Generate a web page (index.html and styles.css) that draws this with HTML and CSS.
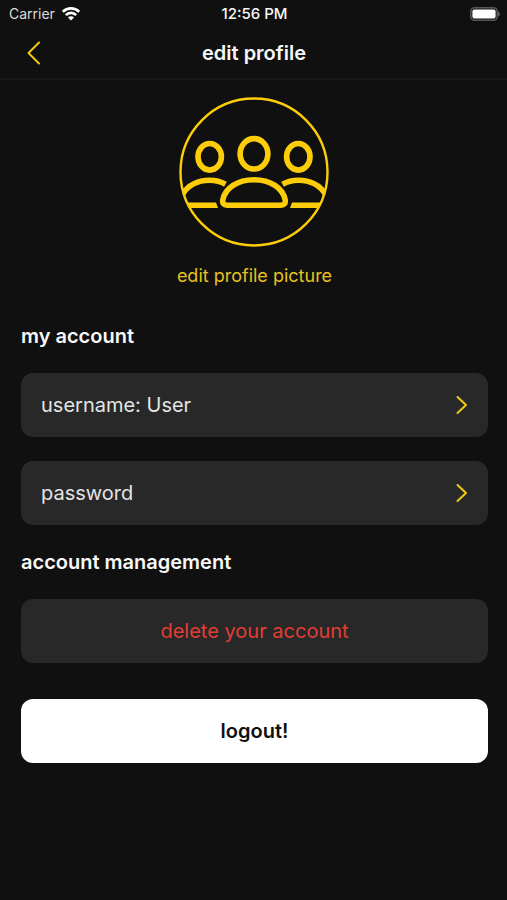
FILE: index.html
```html
<!DOCTYPE html>
<html lang="en">
<head>
<meta charset="utf-8">
<meta name="viewport" content="width=device-width, initial-scale=1">
<title>edit profile</title>
<link rel="stylesheet" href="styles.css">
</head>
<body>
<div class="status">
  <div class="status-left">
    <span class="carrier">Carrier</span>
    <svg class="wifi" width="18" height="14" viewBox="0 0 18 14" fill="none" stroke="#fff" stroke-width="2.6" aria-hidden="true">
      <path d="M0.8 4.8C5.3 0.2 12.7 0.2 17.2 4.8"/>
      <path d="M3.8 8.2C6.7 5.1 11.3 5.1 14.2 8.2"/>
      <path d="M9 13.6L6 10.4C7.7 8.8 10.3 8.8 12 10.4Z" fill="#fff" stroke="none"/>
    </svg>
  </div>
  <span class="clock">12:56 PM</span>
  <div class="status-right">
    <svg width="30" height="14" viewBox="0 0 30 14" aria-hidden="true">
      <rect x="0.8" y="0.8" width="26.4" height="12.4" rx="3.8" fill="none" stroke="#58585a" stroke-width="1.6"/>
      <rect x="2.4" y="2.4" width="23.2" height="9.200" rx="2" fill="#fff"/>
      <path d="M28.200 4.600C30.300 5.400 30.300 8.600 28.200 9.400Z" fill="#6a6a6c"/>
    </svg>
  </div>
</div>
<header class="nav">
  <button class="back" type="button" aria-label="Back">
    <svg width="14" height="24" viewBox="0 0 14 24" fill="none" stroke="#f2ca14" stroke-width="2" stroke-linecap="round" stroke-linejoin="round" aria-hidden="true"><path d="M12 1.500L1.500 12L12 22.500"/></svg>
  </button>
  <h1>edit profile</h1>
</header>
<main>
  <button class="picture" type="button">
    <svg width="150" height="150" viewBox="0 0 150 150" fill="none" stroke="#fccd08" stroke-width="5.6" aria-hidden="true">
      <defs><clipPath id="disc"><circle cx="75" cy="75" r="74"/></clipPath></defs>
      <circle cx="75" cy="75" r="73.5" stroke-width="2.4"/>
      <ellipse cx="75" cy="56.8" rx="13.9" ry="15.2"/>
      <path d="M43.8 103C46 91 58.500 82.800 75 82.800S104 91 106.200 103C106.700 106.300 105.300 108.200 102 108.200H48C44.700 108.200 43.300 106.300 43.800 103Z"/>
      <g clip-path="url(#disc)">
        <ellipse cx="30.700" cy="59.800" rx="11.700" ry="13.300"/>
        <path d="M3 98C9 88 18.500 83.200 30.700 83.200C36.500 83.200 41.500 84.400 46.500 87.200"/>
        <path d="M5 105.400H37L39 111H5Z" fill="#fccd08" stroke="none"/>
        <ellipse cx="119.300" cy="59.800" rx="11.700" ry="13.300"/>
        <path d="M147 98C141 88 131.500 83.200 119.300 83.200C113.500 83.200 108.500 84.400 103.500 87.200"/>
        <path d="M145 105.400H113L111 111H145Z" fill="#fccd08" stroke="none"/>
      </g>
    </svg>
    <span>edit profile picture</span>
  </button>
  <h2>my account</h2>
  <div class="rows">
    <button class="row" type="button">
      <span>username: User</span>
      <svg width="12" height="20" viewBox="0 0 12 20" fill="none" stroke="#f2ca14" stroke-width="2" stroke-linecap="round" stroke-linejoin="round" aria-hidden="true"><path d="M1.500 2L10 10L1.500 18"/></svg>
    </button>
    <button class="row" type="button">
      <span>password</span>
      <svg width="12" height="20" viewBox="0 0 12 20" fill="none" stroke="#f2ca14" stroke-width="2" stroke-linecap="round" stroke-linejoin="round" aria-hidden="true"><path d="M1.500 2L10 10L1.500 18"/></svg>
    </button>
  </div>
  <h2>account management</h2>
  <div class="actions">
    <button class="row delete" type="button">delete your account</button>
    <button class="row logout" type="button">logout!</button>
  </div>
</main>
</body>
</html>
```
FILE: styles.css
```css
* {
  box-sizing: border-box;
}

body {
  margin: 0;
  min-height: 100vh;
  background: #101010;
  color: #f8f8f8;
  font-family: Inter, "Liberation Sans", sans-serif;
  font-size: 20px;
}

button {
  border: 0;
  padding: 0;
  background: none;
  color: inherit;
  font: inherit;
  cursor: pointer;
}

svg {
  display: block;
}

.status {
  display: grid;
  grid-template-columns: 1fr auto 1fr;
  align-items: center;
  height: 27px;
  padding: 0 7px 0 9px;
  font-size: 14px;
}

.status-left {
  display: flex;
  align-items: center;
  gap: 7px;
}

.carrier {
  color: #dcdcdc;
}

.clock {
  font-weight: 500;
  font-size: 15px;
}

.status-right {
  display: flex;
  justify-content: flex-end;
}

.nav {
  display: grid;
  grid-template-columns: 1fr auto 1fr;
  align-items: center;
  height: 53px;
  padding: 0 20px 0 21px;
  border-bottom: 2px solid #181818;
}

.back {
  justify-self: start;
  padding: 4px 6px;
}

h1,
h2 {
  margin: 0;
  font-size: 20px;
  font-weight: 600;
  line-height: 24px;
}

main {
  display: flex;
  flex-direction: column;
  padding: 17px 19px 17px 21px;
}

.picture {
  display: flex;
  flex-direction: column;
  align-items: center;
  align-self: center;
  gap: 17px;
  margin-bottom: 36px;
  color: #e6c21e;
  font-size: 18px;
  line-height: 24px;
}

.rows,
.actions {
  display: flex;
  flex-direction: column;
}

.rows {
  gap: 24px;
  margin: 25px 0;
}

.actions {
  gap: 36px;
  margin-top: 25px;
}

.row {
  display: flex;
  align-items: center;
  justify-content: space-between;
  height: 64px;
  padding: 0 20px;
  border-radius: 12px;
  background: #282828;
  color: #e4e4e4;
}

.delete,
.logout {
  justify-content: center;
}

.delete {
  color: #e13d34;
}

.logout {
  background: #fff;
  color: #101010;
  font-weight: 600;
}
```
